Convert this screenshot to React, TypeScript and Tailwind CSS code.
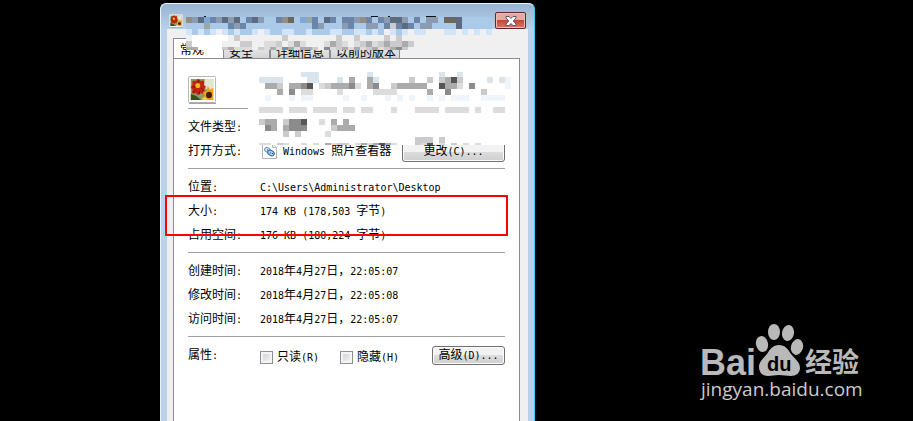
import React from 'react';

const PALETTE: Record<string, string> = {
  a: '#abcaea',
  b: '#6c84a8',
  c: '#5c6b80',
  d: '#8c9cb0',
  e: '#958c84',
  f: '#6d685c',
  g: '#98a9a6',
  h: '#7fa6d8',
  l: '#d2e4f8',
  P: '#d9e4ed',
  Q: '#eef5fb',
  W: '#ffffff',
  w: '#f0f0f0',
  x: '#dcdcdc',
  t: '#cbcbcd',
  y: '#ababab',
  z: '#8b8b8b',
  v: '#565656',
};

interface MosaicRow {
  y: number;
  h: number;
  cells: string;
}

// Title and tab strip
const TITLE_MOSAIC: MosaicRow[] = [
  { y: 2, h: 6, cells: 'edchbdcdcabcdaabefahgbacbabbdebabdccdabaddaffcaaaaa' },
  { y: 8, h: 6, cells: 'aaagaaabdbaaaaaaaaaaabdaaadbaaddabtbcbaddaaaacaaaaa' },
  { y: 14, h: 6, cells: 'lalalwlalaalwlaallaalaaallaallalawlal.ll.w.llwlwlwl' },
  { y: 20, h: 6, cells: 'wWWWWWWwtwwwwwwwtwwwwwwwwtwwtwwwwtwt' },
  { y: 26, h: 6, cells: 'tWWWWWwwwttwwxxtwxyxwwwxytxwxtyxtyttyt' },
  { y: 32, h: 3, cells: 'yyWWWWtyxxxwtxyxzyxyytwzxtyxyxtyxtyzt' },
];

// File name, file type and the strip above the open-with row
const NAME_MOSAIC: MosaicRow[] = [
  { y: 0, h: 5, cells: '.......PPP........P...........P..P' },
  { y: 5, h: 6, cells: 'PPPP....PP...P.y..yP.....t..t.tyvt....P.PQ' },
  { y: 11, h: 6, cells: '.yyt.yyzv.xtyyyzx.yz..tyyyyy..vyyx.z.....Q' },
  { y: 17, h: 6, cells: '...y.z.xx....x.....xxxx.....y..z.....t' },
  { y: 23, h: 6, cells: '.Q...Q.QQ.....Q..Q...Q.Q.Q..Q.Q.QQQ..QQQQ' },
  { y: 35, h: 6, cells: 'xxxx.xxx.xxxx.xx.xx...x...xxxx.xxxx.x..xx' },
  { y: 47, h: 6, cells: 'tyy.tzzv..x.y.y' },
  { y: 53, h: 6, cells: '.zy.yzzz....tyyy' },
  { y: 59, h: 6, cells: '....t.t....x' },
  { y: 65, h: 6, cells: '.......................WWWtttWtWWWWWWWWWW' },
  { y: 71, h: 2, cells: 'xxWtxWWxWxWyxttWxyxyvyxWWWtxvWxWtWxWxWWWW' },
];

const Mosaic: React.FC<{ rows: MosaicRow[]; className: string; width: number; height: number }> = ({
  rows,
  className,
  width,
  height,
}) => (
  <svg className={className} width={width} height={height} shapeRendering="crispEdges" aria-hidden="true">
    {rows.map((row) =>
      row.cells.split('').map((cell, i) =>
        cell === '.' ? null : (
          <rect key={`${row.y}-${i}`} x={i * 6} y={row.y} width={6} height={row.h} fill={PALETTE[cell]} />
        )
      )
    )}
  </svg>
);

/**
 * Half-width Latin is set smaller, so that two Latin cells equal one Chinese character
 */
const Mixed: React.FC<{ text: string }> = ({ text }) => (
  <span className="whitespace-pre">
    {text.split(/([\x20-\x7e]+)/).map((part, i) =>
      /^[\x20-\x7e]+$/.test(part) ? (
        <span key={i} className="text-[10px]">
          {part}
        </span>
      ) : (
        part
      )
    )}
  </span>
);

const FlowerIcon: React.FC<{ size: number; className?: string }> = ({ size, className }) => (
  <svg className={className} width={size} height={size} viewBox="0 0 30 28" preserveAspectRatio="none" aria-hidden="true">
    <rect x="0.5" y="0.5" width="29" height="26" rx="1" fill="#fff" stroke="#b5b5b5" />
    <path d="M1 27.3h29" stroke="#888" />
    <rect x="3" y="3" width="24" height="21" fill="#8d9c62" />
    <path d="M18 3h9v9l-5 3-5-4z" fill="#dfe6d0" />
    <path d="M3 18l6 2 5 4H3z" fill="#39521c" />
    <g fill="#c22414">
      <ellipse cx="11" cy="11" rx="3.5" ry="8" />
      <ellipse cx="11" cy="11" rx="8" ry="3.5" />
      <ellipse cx="11" cy="11" rx="3.5" ry="8.5" transform="rotate(45 11 11)" />
      <ellipse cx="11" cy="11" rx="3.5" ry="8.5" transform="rotate(-45 11 11)" />
    </g>
    <path d="M11 4v4M5 11h3M14 12l4 3M8 14l-3 3M12 15v3" stroke="#7c0d08" />
    <circle cx="10.5" cy="9.5" r="2.6" fill="#e9b91e" />
    <path d="M16 16l4-1 1-5 3 4 3-2v12H15l3-4z" fill="#f2a20d" />
    <path d="M15 22l4-1 2 3h-5z" fill="#ffd02e" />
    <circle cx="22.5" cy="19" r="3.2" fill="#3c220b" />
  </svg>
);

const ViewerIcon: React.FC = () => (
  <svg width="15" height="16" viewBox="0 0 15 16" aria-hidden="true">
    <path d="M0.5 0.5h10l4 4v11h-14z" fill="#fff" stroke="#b4b4b4" />
    <path d="M10.5 0.5v4h4" fill="#eee" stroke="#b4b4b4" />
    <ellipse cx="5.5" cy="7" rx="3" ry="2.2" fill="#d8eafa" stroke="#5b93c4" transform="rotate(30 5.5 7)" />
    <ellipse cx="9" cy="10" rx="3.5" ry="2.5" fill="#a8cdea" stroke="#2d669c" transform="rotate(30 9 10)" />
    <path d="M5 7h1M8 10h1M10 10.5h1" stroke="#24527e" />
  </svg>
);

const Separator: React.FC<{ short?: boolean }> = ({ short }) => (
  <div className="h-3 pt-[5px]">
    <hr className={short ? 'w-15 border-[#a0a0a0]' : 'w-full border-[#a0a0a0]'} />
  </div>
);

const Row: React.FC<{ label: string; children?: React.ReactNode }> = ({ label, children }) => (
  <div className="flex h-6 items-center">
    <span className="w-18 shrink-0">
      <Mixed text={label} />
    </span>
    {children}
  </div>
);

const PushButton: React.FC<{ text: string; className: string }> = ({ text, className }) => (
  <button
    type="button"
    className={`${className} flex items-center justify-center rounded-[3px] border border-[#707070] bg-linear-to-b from-[#f2f2f2] from-50% via-[#dddddd] via-50% to-[#cfcfcf] shadow-[inset_0_0_0_1px_#fcfcfc]`}
  >
    <Mixed text={text} />
  </button>
);

const CheckBox: React.FC<{ id: string; text: string }> = ({ id, text }) => (
  <div className="flex w-20 items-center gap-1 pt-1">
    <input
      id={id}
      type="checkbox"
      className="size-[13px] appearance-none border border-[#8e8f8f] bg-linear-to-br from-[#cbcfd5] to-[#f6f6f6] shadow-[inset_0_0_0_2px_#f4f4f4]"
    />
    <label htmlFor={id}>
      <Mixed text={text} />
    </label>
  </div>
);

const TABS = [
  { name: '安全', width: 'w-[47px]' },
  { name: '详细信息', width: 'w-[60px]' },
  { name: '以前的版本', width: 'w-[70px]' },
];

const PropertiesDialog: React.FC = () => (
  <section className="relative flex w-[375px] shrink-0 flex-col rounded-t-md border-x border-t border-l-[#e8f2fb] border-t-[#e8f2fb] border-r-[#35cdf0] bg-[#b9d1ea] px-[6px]">
    <header className="-mx-[6px] flex h-[25px] items-start justify-between rounded-t-md bg-linear-to-b from-[#98b4d2] to-[#b9d1ea] pl-2 pr-2">
      <FlowerIcon size={14} className="mt-[10px]" />
      <button
        type="button"
        aria-label="关闭"
        className="mt-2 flex h-[17px] w-[31px] items-center justify-center rounded-[2px] border border-[#5b2a30] bg-linear-to-b from-[#e6a99f] from-45% via-[#c4402b] via-45% to-[#d5796a] shadow-[inset_0_0_0_1px_#eebbb2]"
      >
        <svg width="12" height="10" viewBox="0 0 12 10">
          <path d="M1 0.5h3l2 2 2-2h3v1.5L8.3 5 11 8v1.5H8l-2-2-2 2H1V8l2.700-3L1 2z" fill="#fff" stroke="#535666" />
        </svg>
      </button>
    </header>

    <div className="flex flex-1 flex-col bg-[#f0f0f0] pl-[6px] pr-2">
      <nav className="flex h-[29px] items-end">
        <button
          type="button"
          className="-mb-px h-[21px] w-[50px] border-l border-t border-[#898c95] bg-white pl-[6px] pt-[2px] text-left"
        >
          常规
        </button>
        {TABS.map((tab) => (
          <button
            key={tab.name}
            type="button"
            className={`${tab.width} h-[18px] border-x border-t border-[#898c95] bg-linear-to-b from-[#f2f2f2] to-[#d4d4d4] pl-[5px] pt-1 text-left whitespace-nowrap`}
          >
            {tab.name}
          </button>
        ))}
      </nav>

      <div className="flex-1 border-x border-t border-[#898c95] bg-white px-[14px]">
        <div className="h-11 pt-[17px]">
          <FlowerIcon size={28} />
        </div>
        <Separator short />
        <Row label="文件类型:" />
        <Row label="打开方式:">
          <div className="flex flex-1 items-center gap-[6px] pl-[2px]">
            <ViewerIcon />
            <Mixed text="Windows 照片查看器" />
          </div>
          <PushButton text="更改(C)..." className="h-[21px] w-[103px]" />
        </Row>
        <Separator />
        <Row label="位置:">
          <Mixed text="C:\Users\Administrator\Desktop" />
        </Row>
        <Row label="大小:">
          <Mixed text="174 KB (178,503 字节)" />
        </Row>
        <Row label="占用空间:">
          <Mixed text="176 KB (180,224 字节)" />
        </Row>
        <Separator />
        <Row label="创建时间:">
          <Mixed text="2018年4月27日，22:05:07" />
        </Row>
        <Row label="修改时间:">
          <Mixed text="2018年4月27日，22:05:08" />
        </Row>
        <Row label="访问时间:">
          <Mixed text="2018年4月27日，22:05:07" />
        </Row>
        <Separator />
        <Row label="属性:">
          <CheckBox id="readonly" text="只读(R)" />
          <CheckBox id="hidden" text="隐藏(H)" />
          <PushButton text="高级(D)..." className="ml-auto h-[19px] w-[73px]" />
        </Row>
      </div>
    </div>

    {/* Pixelated areas over the title and the file name */}
    <svg className="absolute left-[25px] top-[11px]" width="320" height="4" shapeRendering="crispEdges" aria-hidden="true">
      <path d="M18 1h2M185 1h7M202 1h2M240 1h10" stroke="#111" />
    </svg>
    <Mosaic rows={TITLE_MOSAIC} className="absolute left-[25px] top-[11px]" width={310} height={35} />
    <Mosaic rows={NAME_MOSAIC} className="absolute left-[98px] top-[68px]" width={254} height={73} />

    {/* Highlight round the size row */}
    <div className="absolute left-1 top-[191px] h-[41px] w-[343px] border-2 border-[#f00]" />
  </section>
);

const Watermark: React.FC = () => (
  <svg className="mb-4 mr-11 shrink-0 self-end" width="170" height="82" viewBox="0 0 170 82" role="img" aria-label="Baidu 经验">
    <g fill="#b9b9b9">
      <text x="1" y="52" fontSize="36" fontWeight="700" fontFamily="'Liberation Sans', Arial, sans-serif">
        Bai
      </text>
      <ellipse cx="63" cy="21" rx="6" ry="8" transform="rotate(-12 63 21)" />
      <ellipse cx="75" cy="9" rx="6" ry="8" />
      <ellipse cx="89" cy="10" rx="6" ry="8" transform="rotate(10 89 10)" />
      <ellipse cx="98" cy="24" rx="6" ry="8" transform="rotate(15 98 24)" />
      <path d="M80 22c6 0 9 4 12 9 4 5 9 8 9 14 0 5-4 8-9 8-4 0-8-1-12-1s-7 1-11 1c-6 0-9-4-9-9 0-6 5-9 8-13 3-5 6-9 12-9z" />
      <text x="106" y="49" fontSize="27" fontWeight="700" fontFamily="'Noto Sans CJK SC', sans-serif">
        经验
      </text>
    </g>
    <text x="68" y="48" fontSize="20" fontWeight="700" fill="#000" fontFamily="'Liberation Sans', Arial, sans-serif">
      du
    </text>
    <text x="2" y="73" fontSize="19" fontWeight="500" fill="#cccccc" fontFamily="'Open Sans', sans-serif">
      jingyan.baidu.com
    </text>
  </svg>
);

export default function App() {
  return (
    <main className="flex min-h-screen justify-between overflow-hidden bg-black pl-40 pt-[3px] font-['DejaVu_Sans_Mono','Noto_Sans_CJK_SC',monospace] text-[12px] leading-4 text-black">
      <PropertiesDialog />
      <Watermark />
    </main>
  );
}
